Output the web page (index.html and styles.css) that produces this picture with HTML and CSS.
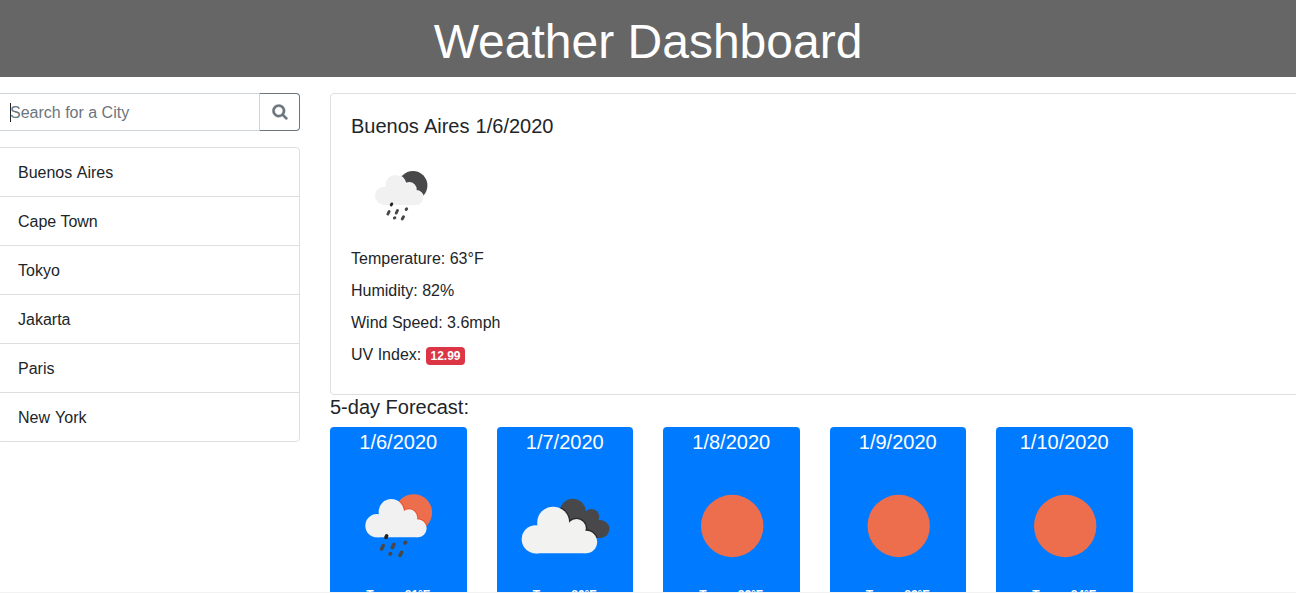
FILE: index.html
```html
<!DOCTYPE html>
<html lang="en">
<head>
<meta charset="utf-8">
<title>Weather Dashboard</title>
<link rel="stylesheet" href="styles.css">
</head>
<body>
<svg width="0" height="0" class="defs" aria-hidden="true">
  <defs>
    <g id="rain-body"><circle cx="65" cy="137" r="35"/><circle cx="108" cy="95" r="38"/><circle cx="161" cy="113" r="25"/><circle cx="187" cy="145" r="27"/><path d="M65 172V110L108 90L161 105L187 130V172Z"/></g>
    <g id="rain-cloud">
      <use href="#rain-body" fill="#f1f1f1"/>
      <g stroke="#48484a" stroke-width="11" stroke-linecap="round"><path stroke="#222" d="M92 172L94 168"/><path d="M79 207L84 197M111 203L116 193M149 189L151 187M104 222L106 221M134 226L139 217"/></g>
    </g>
    <clipPath id="disc"><circle cx="175" cy="98" r="55.500"/></clipPath>
    <g id="back-cloud"><circle cx="172" cy="80" r="39"/><circle cx="228" cy="95" r="23"/><circle cx="255" cy="132" r="27"/><path d="M172 41L212 80L256 110V159H180Z"/></g>
    <clipPath id="back-clip"><circle cx="172" cy="80" r="39"/><circle cx="228" cy="95" r="23"/><circle cx="255" cy="132" r="27"/><path d="M172 41L212 80L256 110V159H180Z"/></clipPath>
    <g id="front-cloud"><circle cx="61" cy="163" r="42.500"/><circle cx="113" cy="113" r="48"/><circle cx="183" cy="130" r="28"/><circle cx="211" cy="171" r="34"/><path d="M61 205V140L113 100L183 120L211 150V205Z"/></g>
  </defs>
</svg>
<header class="banner"><h1>Weather Dashboard</h1></header>
<main class="layout">
  <aside class="sidebar">
    <form class="search">
      <div class="field"><span class="caret"></span><span>Search for a City</span></div>
      <button class="search-btn" type="button" aria-label="Search"><svg width="16" height="16" viewBox="-40 80 1760 1760"><path fill="currentColor" stroke="currentColor" stroke-width="40" d="M1152 832q0-185-131.500-316.500T704 384 387.500 515.500 256 832t131.500 316.500T704 1280t316.500-131.500T1152 832zm512 832q0 52-38 90t-90 38q-54 0-90-38l-343-342q-179 124-399 124-143 0-273.500-55.500t-225-150-150-225T0 832t55.500-273.500 150-225 225-150T704 128t273.500 55.500 225 150 150 225T1408 832q0 220-124 399l343 343q37 37 37 90z"/></svg></button>
    </form>
    <ul class="cities">
      <li class="spaced">Buenos Aires</li><li>Cape Town</li><li>Tokyo</li><li>Jakarta</li><li>Paris</li><li class="spaced">New York</li>
    </ul>
  </aside>
  <section class="content">
    <article class="current">
      <h5 class="spaced">Buenos Aires 1/6/2020</h5>
      <svg class="current-icon" viewBox="0 0 100 100"><g transform="translate(16.2 12) scale(.2613)"><circle cx="175" cy="98" r="55.500" fill="#48484a"/><g clip-path="url(#disc)"><use href="#rain-body" fill="none" stroke="#f6f6f6" stroke-width="7"/></g><use href="#rain-cloud"/></g></svg>
      <p>Temperature: 63°F</p>
      <p>Humidity: 82%</p>
      <p>Wind Speed: 3.6mph</p>
      <p>UV Index: <span class="badge">12.99</span></p>
    </article>
    <h5 class="forecast-title">5-day Forecast:</h5>
    <div class="forecast">
      <div class="day"><h5>1/6/2020</h5><svg viewBox="0 0 136.5 136"><g transform="translate(25.300 26) scale(.3333)"><circle cx="175" cy="98" r="55.500" fill="#ec6e4c"/><g clip-path="url(#disc)"><use href="#rain-body" fill="none" stroke="#ea4f2d" stroke-width="6"/></g><use href="#rain-cloud"/></g></svg><p>Temp: 81°F</p></div>
      <div class="day"><h5>1/7/2020</h5><svg viewBox="0 0 136.5 136"><g transform="translate(18.500 31) scale(.3333)"><use href="#back-cloud" fill="#48484a"/><g clip-path="url(#back-clip)"><use href="#front-cloud" fill="none" stroke="#29292b" stroke-width="8"/></g><use href="#front-cloud" fill="#f2f2f0"/></g></svg><p>Temp: 80°F</p></div>
      <div class="day"><h5>1/8/2020</h5><svg viewBox="0 0 136.5 136"><circle cx="69.200" cy="72" r="31.200" fill="#ec6e4c"/></svg><p>Temp: 82°F</p></div>
      <div class="day"><h5>1/9/2020</h5><svg viewBox="0 0 136.5 136"><circle cx="68.700" cy="72" r="31.200" fill="#ec6e4c"/></svg><p>Temp: 82°F</p></div>
      <div class="day"><h5>1/10/2020</h5><svg viewBox="0 0 136.5 136"><circle cx="69.200" cy="72" r="31.200" fill="#ec6e4c"/></svg><p>Temp: 84°F</p></div>
    </div>
  </section>
</main>
<div class="page-edge"></div>
</body>
</html>
```
FILE: styles.css
```css
* { box-sizing: border-box; }
body {
  margin: 0;
  height: 593px;
  display: flex;
  flex-direction: column;
  overflow: hidden;
  background: #fff;
  color: #212529;
  font: 16px/24px "Liberation Sans", Arial, sans-serif;
}
h1, h5, p, ul { margin: 0; padding: 0; font-weight: 400; }
h5 { font-size: 20px; line-height: 24px; }
.spaced { word-spacing: .055em; }
h5.spaced { word-spacing: .03em; }
.defs { position: absolute; }
.banner {
  flex: none;
  height: 77px;
  padding-top: 13px;
  background: #666;
  color: #fff;
  text-align: center;
}
.banner h1 { font-size: 48px; line-height: 58px; }
.layout {
  flex: 1;
  min-height: 0;
  overflow: hidden;
  display: flex;
  gap: 30px;
  padding-top: 16px;
  margin-left: -3px;
}
.sidebar { width: 303px; flex: none; }
.search { display: flex; height: 38px; margin-bottom: 16px; }
.field {
  flex: 1;
  padding: 7px 12px 5px;
  border: 1px solid #ced4da;
  border-radius: 4px 0 0 4px;
  color: #6c757d;
}
.caret {
  display: inline-block;
  width: 1px;
  height: 19px;
  margin-right: -1px;
  vertical-align: -4px;
  background: #212529;
}
.search-btn {
  width: 41px;
  margin-left: -1px;
  padding: 0;
  display: flex;
  align-items: center;
  justify-content: center;
  border: 1px solid #6c757d;
  border-left-color: #ced4da;
  border-radius: 0 4px 4px 0;
  background: #fff;
  color: #6c757d;
}
.cities {
  list-style: none;
  border: 1px solid #dfdfdf;
  border-radius: 4px;
}
.cities li { padding: 13px 20px 11px; }
.cities li + li { border-top: 1px solid #dfdfdf; }
.content { flex: none; width: 999px; }
.current {
  height: 302px;
  padding: 20px;
  border: 1px solid #dfdfdf;
  border-radius: 4px;
}
.current-icon { display: block; width: 100px; height: 100px; margin: 10px 0 -1px; }
.current p { margin-bottom: 8px; }
.badge {
  display: inline-block;
  padding: 3px 4.8px;
  border-radius: 4px;
  background: #dc3545;
  color: #fff;
  font-size: 12px;
  font-weight: 700;
  line-height: 12px;
  vertical-align: baseline;
}
.forecast-title { margin-bottom: 8px; }
.forecast { display: grid; grid-template-columns: repeat(5, 136.5px); gap: 30px; }
.day {
  height: 230px;
  padding-top: 3px;
  border-radius: 4px;
  background: #007bff;
  color: #fff;
  text-align: center;
}
.day svg { display: block; width: 136.5px; height: 136px; }
.day p { font-size: 12px; font-weight: 700; line-height: 12px; margin-top: -1px; }
.page-edge { flex: none; height: 1px; background: #f2f2f2; }
```
